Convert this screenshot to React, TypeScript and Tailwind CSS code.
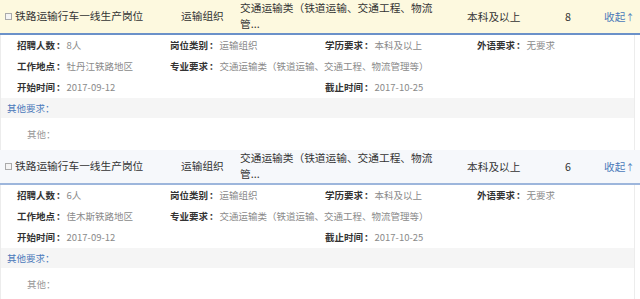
const JOBS = [
  { count: 8, place: '牡丹江铁路地区', headBg: 'bg-[#fdf9df]', line: 'border-[#6b91c9]' },
  { count: 6, place: '佳木斯铁路地区', headBg: 'bg-[#f6f8fb]', line: 'border-[#9db6dc]' },
];

function Label({ k, v }: { k: string; v: string }) {
  return (
    <div className="whitespace-nowrap">
      <span className="font-bold text-[#333]">{k}</span>
      <span className="font-bold text-[#333] px-[1px]">：</span>
      <span className="text-[#8a8a8a]">{v}</span>
    </div>
  );
}

function JobBlock({ job }: { job: (typeof JOBS)[number] }) {
  return (
    <div className="h-[150px]">
      {/* Header */}
      <div className={`${job.headBg} h-[35px] border-b-2 ${job.line} flex items-center text-[10.7px] text-[#333]`}>
        <span className="ml-[5px] w-[7px] h-[7px] border border-[#aaa] bg-[#f4f4f4]" />
        <span className="ml-[3px] w-[166px]">铁路运输行车一线生产岗位</span>
        <span className="w-[59px]">运输组织</span>
        <div className="w-[227px] leading-[16px] -mt-[1px]">
          <div>交通运输类（铁道运输、交通工程、物流</div>
          <div>管...</div>
        </div>
        <span className="w-[98px] mt-[1px]">本科及以上</span>
        <span className="w-[39px] mt-[1px]">{job.count}</span>
        <span className="text-[#4a78ba] mt-[1px]">
          收起<span className="text-[9px]">↑</span>
        </span>
      </div>

      {/* Details */}
      <div className="w-[635px] h-[115px] border-x border-[#ececec] text-[9.5px]">
        <div className="grid grid-cols-[153px_155px_152px_1fr] pl-[16px] items-center">
          <div className="h-[21px] flex items-center"><Label k="招聘人数" v={`${job.count}人`} /></div>
          <div className="h-[21px] flex items-center"><Label k="岗位类别" v="运输组织" /></div>
          <div className="h-[21px] flex items-center"><Label k="学历要求" v="本科及以上" /></div>
          <div className="h-[21px] flex items-center"><Label k="外语要求" v="无要求" /></div>

          <div className="h-[21px] flex items-center"><Label k="工作地点" v={job.place} /></div>
          <div className="h-[21px] flex items-center col-span-3">
            <Label k="专业要求" v="交通运输类（铁道运输、交通工程、物流管理等）" />
          </div>

          <div className="h-[21px] flex items-center"><Label k="开始时间" v="2017-09-12" /></div>
          <div className="h-[21px]" />
          <div className="h-[21px] flex items-center"><Label k="截止时间" v="2017-10-25" /></div>
          <div className="h-[21px]" />
        </div>
        <div className="h-[20px] bg-[#f5f5f5] flex items-center pl-[6px] text-[#4a78ba]">其他要求：</div>
        <div className="h-[32px] pl-[26px] pt-[9px] text-[#999]">其他：</div>
      </div>
    </div>
  );
}

export default function App() {
  return (
    <div
      className="w-[640px] h-[299px] overflow-hidden bg-white"
      style={{ fontFamily: '"Noto Sans CJK SC", "Noto Sans", sans-serif' }}
    >
      {JOBS.map((j, i) => (
        <JobBlock key={i} job={j} />
      ))}
    </div>
  );
}
